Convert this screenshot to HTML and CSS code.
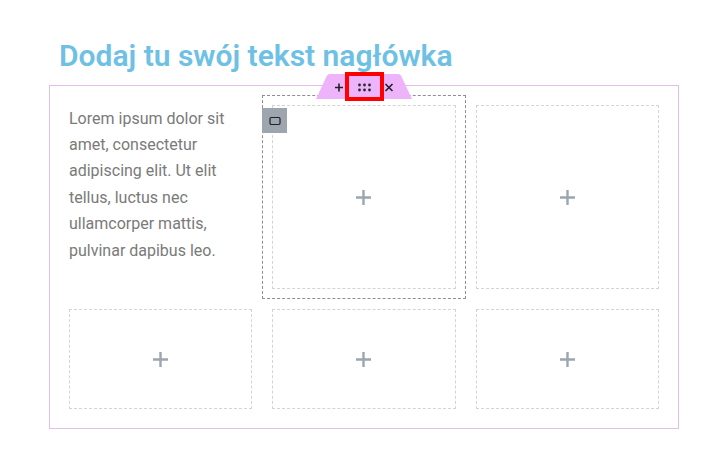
FILE: index.html
```html
<!DOCTYPE html>
<html>
<head>
    <meta charset="utf-8">
    <title>Dodaj tu swój tekst nagłówka</title>
    <link rel="stylesheet" href="styles.css">
</head>
<body>
    <h1 class="heading">Dodaj tu swój tekst nagłówka</h1>

    <div class="section">
        <div class="handle">
            <svg class="handle-shape" viewBox="0 0 96 25"><path d="M0 25L10.6 2.2Q11.6 0 14 0H82Q84.4 0 85.4 2.2L96 25Z"/></svg>
            <svg class="handle-icon" viewBox="0 0 10 10"><path d="M5 1.5v8M1 5.5h8"/></svg>
            <span class="handle-move">
                <svg class="move-dots" viewBox="0 0 14 10"><circle cx="1.5" cy="3" r="1.4"/><circle cx="6.5" cy="3" r="1.4"/><circle cx="11.5" cy="3" r="1.4"/><circle cx="1.5" cy="8" r="1.4"/><circle cx="6.5" cy="8" r="1.4"/><circle cx="11.5" cy="8" r="1.4"/></svg>
            </span>
            <svg class="handle-icon" viewBox="0 0 10 10"><path d="M1.5 2l7 7M8.5 2l-7 7"/></svg>
        </div>

        <div class="grid">
            <p class="lorem">Lorem ipsum dolor sit amet, consectetur adipiscing elit. Ut elit tellus, luctus nec ullamcorper mattis, pulvinar dapibus leo.</p>

            <div class="cell tall selected">
                <span class="column-tag">
                    <svg viewBox="0 0 12 10"><rect x="1" y="1.5" width="10" height="7" rx="1.2"/></svg>
                </span>
                <svg class="plus" viewBox="0 0 15 15"><path d="M7.5 0v15M0 7.5h15"/></svg>
            </div>
            <div class="cell tall">
                <svg class="plus" viewBox="0 0 15 15"><path d="M7.5 0v15M0 7.5h15"/></svg>
            </div>

            <div class="cell short">
                <svg class="plus" viewBox="0 0 15 15"><path d="M7.5 0v15M0 7.5h15"/></svg>
            </div>
            <div class="cell short">
                <svg class="plus" viewBox="0 0 15 15"><path d="M7.5 0v15M0 7.5h15"/></svg>
            </div>
            <div class="cell short">
                <svg class="plus" viewBox="0 0 15 15"><path d="M7.5 0v15M0 7.5h15"/></svg>
            </div>
        </div>
    </div>
</body>
</html>
```

FILE: styles.css
```css
body { margin: 0; background: #fff; font-family: Roboto, sans-serif; }
.heading { margin: 0; padding: 38px 0 0 59px; height: 85px; font-size: 30px; font-weight: 600; line-height: 35px; color: #6ec1e4; box-sizing: border-box; }
.section { position: relative; width: 630px; height: 344px; margin-left: 49px; border: 1px solid #e2bfe8; box-sizing: border-box; padding: 19px; }
.grid { display: grid; grid-template-columns: 183.33px 183.33px 183.33px; grid-template-rows: 184px 100px; gap: 20px; }
.lorem { margin: 0; padding: 0.5px 20px 0 0; font-size: 16px; line-height: 26.4px; color: #7a7a7a; }
.cell { position: relative; display: flex; align-items: center; justify-content: center; border: 1px dashed #d2d4d7; box-sizing: border-box; }
.plus { width: 15px; height: 15px; fill: none; stroke: #9da5ae; stroke-width: 2.4; }
.selected::before { content: ""; position: absolute; top: -11px; left: -11px; right: -11px; bottom: -11px; border: 1px dashed #8f8f8f; }
.column-tag { position: absolute; top: 2px; left: -11px; width: 25px; height: 25px; display: flex; align-items: center; justify-content: center; background: #9da5ae; }
.column-tag svg { width: 12px; height: 10px; fill: none; stroke: #1f2124; stroke-width: 1.2; }
.handle { position: absolute; top: -12px; left: 266px; width: 96px; height: 25px; z-index: 2; display: flex; align-items: center; justify-content: center; }
.handle-shape { position: absolute; top: 0; left: 0; width: 96px; height: 25px; fill: #eeb4fb; }
.handle-icon { position: relative; width: 10px; height: 10px; fill: none; stroke: #1f2124; stroke-width: 1.6; }
.handle-move { position: relative; flex: none; width: 39px; height: 29px; margin-left: 1px; display: flex; align-items: center; justify-content: center; border: 4px solid #f00; box-sizing: border-box; }
.move-dots { width: 14px; height: 10px; fill: #2a2a2a; }
```
